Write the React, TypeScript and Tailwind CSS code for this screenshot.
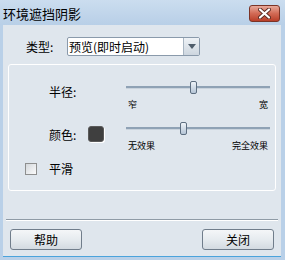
import React from "react";

const font = { fontFamily: '"Noto Sans CJK SC", "Noto Sans", sans-serif' };

function Slider({ pos, left, right }: { pos: number; left: string; right: string }) {
  return (
    <div className="w-[144px] flex flex-col">
      <div className="relative h-[13px]">
        <div className="absolute left-0 right-0 top-[5px] h-[3px] bg-[#8fa2b5] border-b border-[#c9d3dd]" />
        <div
          className="absolute top-0 w-[7px] h-[13px] rounded-[2px] border border-[#5d6e80] bg-gradient-to-b from-[#eef3f8] to-[#b5c5d6]"
          style={{ left: pos }}
        />
      </div>
      <div className="mt-[6px] flex justify-between text-[9px] leading-[10px] text-black px-[2px]">
        <span>{left}</span>
        <span>{right}</span>
      </div>
    </div>
  );
}

export default function App() {
  return (
    <div className="w-[285px] h-[260px] flex flex-col bg-[#b9d0e8] text-black" style={font}>
      <div className="h-[25px] flex items-start justify-between bg-gradient-to-b from-[#cbddef] to-[#b8cfe7] pl-[3px] pr-[5px]">
        <span className="mt-[5px] text-[13px] leading-[17px]">环境遮挡阴影</span>
        <div className="mt-[5px] w-[31px] h-[17px] rounded-[3px] border border-[#7b3326] bg-gradient-to-b from-[#e7a89a] via-[#d26a55] to-[#b93e28] flex items-center justify-center">
          <svg width="13" height="11" viewBox="0 0 13 11">
            <path d="M2 1.5 L11 9.5 M11 1.5 L2 9.5" stroke="#5a2a22" strokeWidth="4" strokeLinecap="round" />
            <path d="M2 1.5 L11 9.5 M11 1.5 L2 9.5" stroke="#ffffff" strokeWidth="2.2" strokeLinecap="round" />
          </svg>
        </div>
      </div>
      <div className="flex-1 mx-[3px] mr-[4px] mb-[3px] bg-[#dfe6ed] flex flex-col border-b border-[#4aa3dc]">
        <div className="mt-[12px] h-[19px] flex items-center">
          <div className="w-[64px] pl-[23px] text-[12px] leading-[15px]">类型:</div>
          <div className="w-[133px] h-[19px] flex border border-[#8a9aab] rounded-[2px] bg-white">
            <div className="flex-1 pl-[1px] text-[12px] leading-[17px]">预览(即时启动)</div>
            <div className="w-[16px] h-full border-l border-[#a8b5c2] bg-gradient-to-b from-[#eef2f6] to-[#cdd6df] flex items-center justify-center">
              <svg width="8" height="5" viewBox="0 0 8 5">
                <path d="M0 0 H8 L4 5 Z" fill="#4f5d6b" />
              </svg>
            </div>
          </div>
        </div>
        <div className="mt-[8px] mx-[5px] h-[127px] border border-white rounded-[3px] flex flex-col">
          <div className="flex pt-[16px]">
            <div className="w-[117px] pl-[40px] mt-[3px] text-[12px] leading-[15px]">半径:</div>
            <Slider pos={64} left="窄" right="宽" />
          </div>
          <div className="flex mt-[12px]">
            <div className="w-[117px] pl-[40px] flex items-start">
              <span className="w-[39px] mt-[5px] text-[12px] leading-[15px]">颜色:</span>
              <div className="mt-[4px] w-[16px] h-[16px] rounded-[3px] bg-[#3f3f3f] border border-[#5a5a5a] shadow-[1px_1px_0_#ffffff]" />
            </div>
            <Slider pos={54} left="无效果" right="完全效果" />
          </div>
          <div className="flex items-center mt-[10px] pl-[16px]">
            <div className="w-[12px] h-[12px] border border-[#8e8f8f] bg-gradient-to-br from-[#d4d8dc] to-[#fbfbfb] p-[1px]" />
            <span className="ml-[12px] text-[12px] leading-[15px]">平滑</span>
          </div>
        </div>
        <div className="mt-[28px] mx-[3px] h-[2px] border-t border-[#8f9ba6] border-b border-b-white" />
        <div className="mt-[8px] flex justify-between pl-[7px] pr-[7px]">
          <div className="w-[72px] h-[21px] rounded-[3px] border border-[#707d8b] bg-gradient-to-b from-[#f4f6f8] via-[#e6ebef] to-[#d3dae1] flex items-center justify-center text-[12px]">帮助</div>
          <div className="w-[72px] h-[21px] rounded-[3px] border border-[#707d8b] bg-gradient-to-b from-[#f4f6f8] via-[#e6ebef] to-[#d3dae1] flex items-center justify-center text-[12px]">关闭</div>
        </div>
      </div>
    </div>
  );
}
